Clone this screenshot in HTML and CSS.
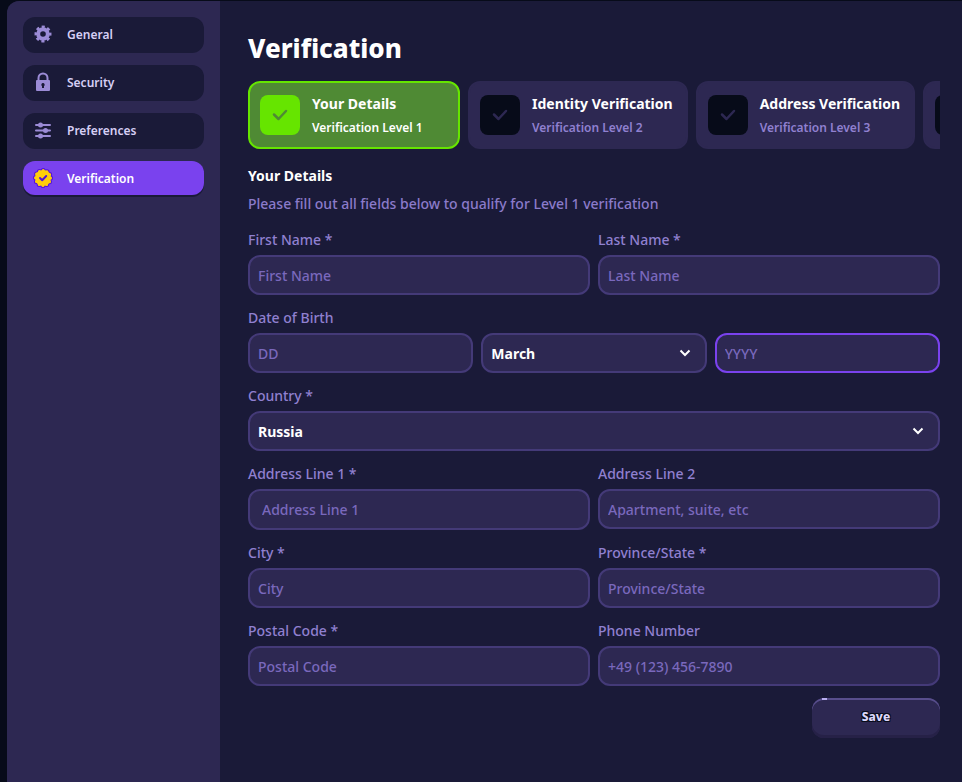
FILE: index.html
```html
<!DOCTYPE html>
<html lang="en">
	<head>
		<meta charset="UTF-8" />
		<meta name="viewport" content="width=device-width, initial-scale=1.0" />
		<title>Verification</title>
		<link rel="stylesheet" href="styles.css">
	</head>
	<body>
		<div class="page">
			<nav class="sidebar" aria-label="Settings">
				<a class="nav-item" href="#general">
					<svg class="nav-icon" viewBox="0 0 20 20" aria-hidden="true">
						<g fill="none" stroke="currentColor">
							<circle cx="10" cy="10" r="4.8" stroke-width="4" />
							<circle cx="10" cy="10" r="7" stroke-width="3" stroke-dasharray="3 2.498" stroke-dashoffset="1.5" />
						</g>
					</svg>
					General
				</a>
				<a class="nav-item" href="#security">
					<svg class="nav-icon" viewBox="0 0 20 20" aria-hidden="true">
						<path fill="none" stroke="currentColor" stroke-width="2" d="M5.5 9V6a4.5 4.5 0 0 1 9 0v3" />
						<path fill="currentColor" fill-rule="evenodd" d="M4 8h12a1 1 0 0 1 1 1v9a1 1 0 0 1-1 1H4a1 1 0 0 1-1-1V9a1 1 0 0 1 1-1zm6 3a1.8 1.8 0 0 0-1 3.2V16h2v-1.8A1.8 1.8 0 0 0 10 11z" />
					</svg>
					Security
				</a>
				<a class="nav-item" href="#preferences">
					<svg class="nav-icon" viewBox="0 0 20 20" aria-hidden="true">
						<path fill="none" stroke="currentColor" stroke-width="2" stroke-linecap="round" d="M3 5h14M3 10.5h14M3 16h14" />
						<g fill="currentColor">
							<circle cx="7.5" cy="5" r="2.5" />
							<circle cx="12.5" cy="10.5" r="2.5" />
							<circle cx="7.5" cy="16" r="2.5" />
						</g>
					</svg>
					Preferences
				</a>
				<a class="nav-item active" href="#verification" aria-current="page">
					<svg class="nav-icon" viewBox="0 0 20 20" aria-hidden="true">
						<g fill="none" stroke-linecap="round" stroke-dasharray="0 3.927">
							<circle cx="10" cy="10" r="7.5" stroke="#5313d8" stroke-width="5" />
							<circle cx="10" cy="10" r="7.5" stroke="#ffcf0a" stroke-width="3" />
						</g>
						<circle cx="10" cy="10" r="8" fill="#ffcf0a" />
						<path fill="none" stroke="#5313d8" stroke-width="2" stroke-linecap="round" stroke-linejoin="round" d="M7 10l2.2 2.2L13.2 8" />
					</svg>
					Verification
				</a>
			</nav>

			<main class="content">
				<h1>Verification</h1>

				<div class="steps">
					<button class="step current" type="button">
						<span class="step-check">
							<svg viewBox="0 0 16 16" aria-hidden="true"><path d="M2 7.5L6.500 12L14 4" /></svg>
						</span>
						<span class="step-text">
							<span class="step-title">Your Details</span>
							<span class="step-level">Verification Level 1</span>
						</span>
					</button>
					<button class="step" type="button">
						<span class="step-check">
							<svg viewBox="0 0 16 16" aria-hidden="true"><path d="M2 7.5L6.500 12L14 4" /></svg>
						</span>
						<span class="step-text">
							<span class="step-title">Identity Verification</span>
							<span class="step-level">Verification Level 2</span>
						</span>
					</button>
					<button class="step" type="button">
						<span class="step-check">
							<svg viewBox="0 0 16 16" aria-hidden="true"><path d="M2 7.5L6.500 12L14 4" /></svg>
						</span>
						<span class="step-text">
							<span class="step-title">Address Verification</span>
							<span class="step-level">Verification Level 3</span>
						</span>
					</button>
					<button class="step" type="button" aria-label="Verification Level 4">
						<span class="step-check">
							<svg viewBox="0 0 16 16" aria-hidden="true"><path d="M2 7.5L6.500 12L14 4" /></svg>
						</span>
					</button>
				</div>

				<h2>Your Details</h2>
				<p class="intro">Please fill out all fields below to qualify for Level 1 verification</p>

				<form class="details">
					<div class="row">
						<div class="field">
							<label for="firstName">First Name *</label>
							<input type="text" id="firstName" placeholder="First Name" />
						</div>
						<div class="field">
							<label for="lastName">Last Name *</label>
							<input type="text" id="lastName" placeholder="Last Name" />
						</div>
					</div>

					<div class="field">
						<label for="day">Date of Birth</label>
						<div class="row dates">
							<input type="text" id="day" placeholder="DD" />
							<div class="select">
								<select id="month" aria-label="Month">
									<option>March</option>
								</select>
								<svg viewBox="0 0 12 12" aria-hidden="true"><path d="M1.5 3.5L6 8l4.5-4.5" /></svg>
							</div>
							<input class="focused" type="text" id="year" placeholder="YYYY" aria-label="Year" />
						</div>
					</div>

					<div class="field">
						<label for="country">Country *</label>
						<div class="select">
							<select id="country">
								<option>Russia</option>
							</select>
							<svg viewBox="0 0 12 12" aria-hidden="true"><path d="M1.5 3.5L6 8l4.5-4.5" /></svg>
						</div>
					</div>

					<div class="row">
						<div class="field">
							<label for="address1">Address Line 1 *</label>
							<input class="autocomplete" type="text" id="address1" placeholder="Address Line 1" />
						</div>
						<div class="field">
							<label for="address2">Address Line 2</label>
							<input type="text" id="address2" placeholder="Apartment, suite, etc" />
						</div>
					</div>

					<div class="row">
						<div class="field">
							<label for="city">City *</label>
							<input type="text" id="city" placeholder="City" />
						</div>
						<div class="field">
							<label for="state">Province/State *</label>
							<input type="text" id="state" placeholder="Province/State" />
						</div>
					</div>

					<div class="row">
						<div class="field">
							<label for="postal">Postal Code *</label>
							<input type="text" id="postal" placeholder="Postal Code" />
						</div>
						<div class="field">
							<label for="phone">Phone Number</label>
							<input type="tel" id="phone" placeholder="+49 (123) 456-7890" />
						</div>
					</div>

					<button class="save" type="submit">Save</button>
				</form>
			</main>
		</div>
	</body>
</html>
```

FILE: styles.css
```css
* {
	box-sizing: border-box;
}

body {
	margin: 0;
	background-color: #070b19;
	color: #fff;
	font-family: 'Noto Sans', 'Open Sans', sans-serif;
	font-size: 14px;
	font-weight: 500;
}

h1,
h2,
p {
	margin: 0;
}

.page {
	display: flex;
	min-height: calc(100vh - 1px);
	margin: 1px 0 0 7px;
	border-top-left-radius: 12px;
	overflow: hidden;
	background-color: #1a1a38;
}

.sidebar {
	display: flex;
	flex-direction: column;
	flex: none;
	gap: 12px;
	width: 213px;
	padding: 16px;
	background-color: #2d2852;
}

.nav-item {
	display: flex;
	align-items: center;
	gap: 14px;
	height: 36px;
	padding: 0 10px 2px;
	border-radius: 12px;
	background-color: #1a1a38;
	color: #d6cff5;
	font-size: 12px;
	font-weight: 600;
	text-decoration: none;
}

.nav-item.active {
	height: 34px;
	padding-bottom: 0;
	background-color: #7a42ee;
	color: #fff;
	box-shadow: 0 2px 0 #1a1a38;
}

.nav-icon {
	width: 20px;
	height: 20px;
	color: #9b8bd6;
}

.content {
	flex: 1;
	min-width: 0;
	padding: 27px 22px 32px 28px;
}

h1 {
	font-size: 26px;
	font-weight: 800;
	line-height: 40px;
}

.steps {
	display: flex;
	gap: 8px;
	margin-top: 13px;
	overflow: hidden;
}

.step {
	display: flex;
	align-items: center;
	flex: none;
	gap: 12px;
	min-width: 212px;
	height: 68px;
	padding: 0 13px 0 10px;
	border: 2px solid #2d2852;
	border-radius: 12px;
	background-color: #2d2852;
	color: #9080d0;
	font: inherit;
	text-align: left;
}

.step.current {
	border-color: #66e500;
	background-color: #4f8a34;
	color: #fff;
}

.step-check {
	display: grid;
	place-items: center;
	width: 40px;
	height: 40px;
	border-radius: 8px;
	background-color: #070b19;
	color: #2d2852;
}

.current .step-check {
	background-color: #66e500;
	color: #4f8a34;
}

.step-check svg {
	width: 16px;
	height: 16px;
	fill: none;
	stroke: currentColor;
	stroke-width: 2.5;
	stroke-linecap: round;
	stroke-linejoin: round;
}

.step-text {
	display: flex;
	flex-direction: column;
	gap: 4px;
	padding-top: 2px;
	line-height: 20px;
}

.step-title {
	color: #fff;
	font-size: 14px;
	font-weight: 700;
}

.step-level {
	font-size: 12px;
	font-weight: 600;
}

h2 {
	margin-top: 16px;
	font-size: 14px;
	line-height: 22px;
}

.intro {
	margin-top: 6px;
	color: #8b7bca;
	line-height: 22px;
}

.details {
	display: flex;
	flex-direction: column;
	gap: 12px;
	margin-top: 14px;
}

.row {
	display: grid;
	grid-template-columns: repeat(2, minmax(0, 1fr));
	gap: 8px;
}

.dates {
	grid-template-columns: repeat(3, minmax(0, 1fr));
}

.field {
	display: flex;
	flex-direction: column;
	gap: 4px;
}

label {
	color: #9080d0;
	line-height: 22px;
}

input,
select {
	width: 100%;
	height: 40px;
	padding: 0 8px;
	border: 2px solid #443a78;
	border-radius: 12px;
	outline: none;
	background-color: #2d2852;
	color: #fff;
	font: inherit;
}

input::placeholder {
	color: #7a68bd;
	opacity: 1;
}

input.focused,
input:focus {
	border-color: #7a42ee;
}

input.autocomplete {
	height: 41px;
	padding: 0 12px;
}

.select {
	display: grid;
	align-items: center;
}

.select select,
.select svg {
	grid-area: 1 / 1;
}

.select select {
	appearance: none;
	font-weight: 700;
}

.select svg {
	justify-self: end;
	width: 12px;
	height: 12px;
	margin-right: 16px;
	fill: none;
	stroke: #fff;
	stroke-width: 2;
	pointer-events: none;
}

.save {
	position: relative;
	align-self: flex-end;
	width: 128px;
	height: 40px;
	padding: 0 0 3px;
	border: 0;
	border-radius: 12px;
	background-color: #2d2852;
	box-shadow: inset 0 2px 0 #584e8c, inset 0 -3px 0 #262147;
	color: #dcd6fa;
	font: inherit;
	font-size: 12px;
	font-weight: 800;
	text-shadow: 1px 1px 0 #070b19, -1px 1px 0 #070b19, 1px -1px 0 #070b19, -1px -1px 0 #070b19;
}

/* glint on the top edge */
.save::before {
	content: '';
	position: absolute;
	top: 0;
	left: 10px;
	width: 5px;
	height: 2px;
	background-color: #b9aef0;
}
```
